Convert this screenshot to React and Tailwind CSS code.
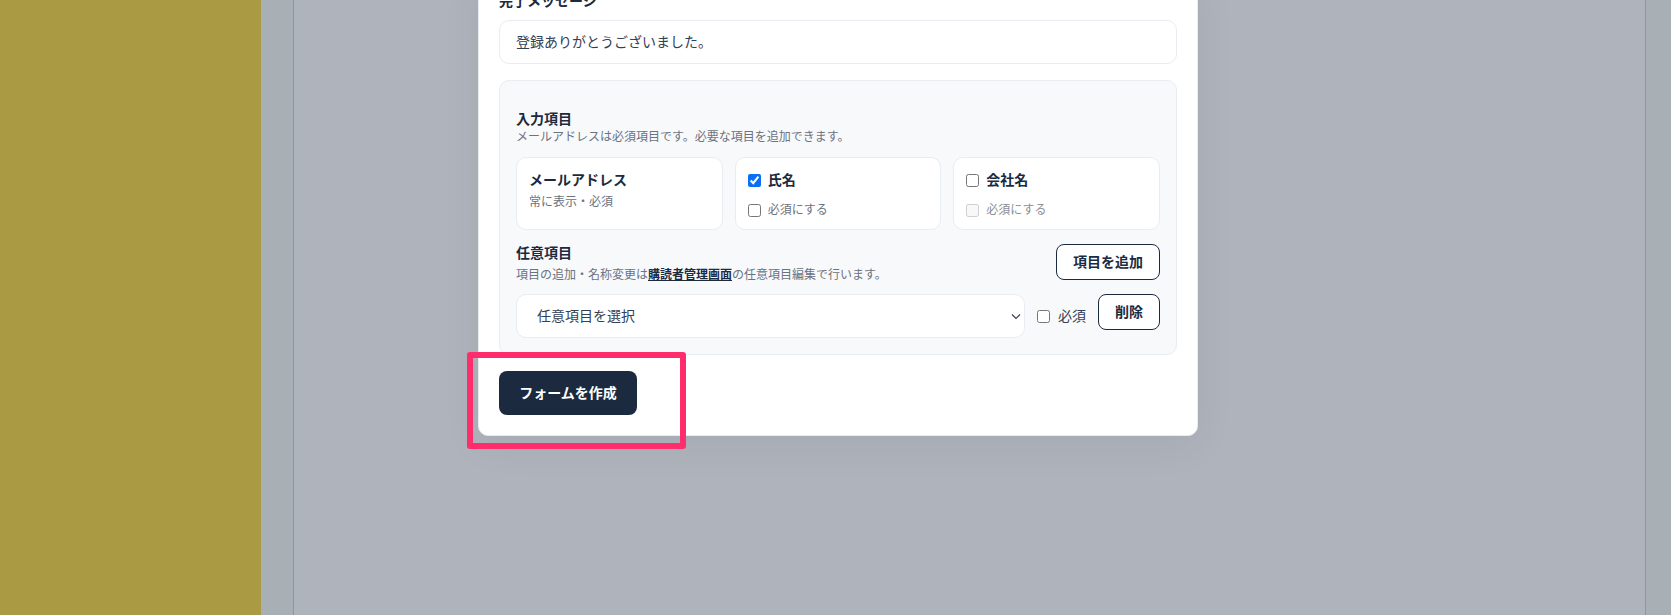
import React from "react";

function Check({ checked, disabled }) {
  return (
    <input
      type="checkbox"
      defaultChecked={checked}
      disabled={disabled}
      className="m-0 h-[13px] w-[13px] shrink-0 accent-[#0b6ff5]"
    />
  );
}

function FieldCard({ label, checked, disabled }) {
  return (
    <div className="flex h-[73px] flex-col rounded-[10px] border border-[#e9ecf1] bg-white px-3 pt-3">
      <label className="flex h-5 items-center gap-[7px] text-sm font-bold leading-5 text-[#1b2a3f]">
        <Check checked={checked} />
        {label}
      </label>
      <label className={`mt-[10px] flex h-5 items-center gap-[7px] text-xs leading-5 ${disabled ? "text-[#8a8f98]" : "text-[#6b7280]"}`}>
        <Check disabled={disabled} />
        必須にする
      </label>
    </div>
  );
}

export default function App() {
  return (
    <div className="relative flex h-[615px] w-[1671px] overflow-hidden bg-[#a9b0b5] font-['Inter','Noto_Sans_CJK_JP',sans-serif]">
      <aside className="w-[261px] shrink-0 bg-[#ab9a44]" />
      <main className="ml-8 mr-[25px] flex-1 border-x border-[#ab9a44] bg-[#afb3bb]" />

      <div className="absolute inset-0 flex items-end pb-[179px] pl-[478px]">
        <div className="w-[720px] rounded-[10px] border border-[#e8ebf0] bg-white p-5 shadow-[0_10px_40px_rgba(17,24,39,0.06)]">
          <label className="mb-[9px] block text-sm font-semibold leading-5 text-[#1b2a3f]">完了メッセージ</label>
          <input
            readOnly
            value="登録ありがとうございました。"
            className="block h-[44px] w-full rounded-[10px] border border-[#e9ecf1] bg-white px-4 pb-[2px] text-sm text-[#344054] outline-none"
          />

          <section className="mt-4 rounded-[10px] border border-[#e9ecf1] bg-[#f8f9fb] px-4 pb-4 pt-[28px]">
            <h3 className="text-sm font-bold leading-5 text-[#1b2a3f]">入力項目</h3>
            <p className="text-xs leading-4 text-[#6b7280]">メールアドレスは必須項目です。必要な項目を追加できます。</p>

            <div className="mt-3 grid grid-cols-3 gap-3">
              <div className="flex h-[73px] flex-col rounded-[10px] border border-[#e9ecf1] bg-white px-3 pt-3">
                <div className="text-sm font-bold leading-5 text-[#1b2a3f]">メールアドレス</div>
                <div className="mt-1 text-xs leading-4 text-[#6b7280]">常に表示・必須</div>
              </div>
              <FieldCard label="氏名" checked />
              <FieldCard label="会社名" disabled />
            </div>

            <div className="mt-[13px] flex items-start justify-between">
              <div>
                <h3 className="text-sm font-bold leading-5 text-[#1b2a3f]">任意項目</h3>
                <p className="mt-1 text-xs leading-4 text-[#6b7280]">
                  項目の追加・名称変更は
                  <a className="font-bold text-[#1b2a3f] underline">購読者管理画面</a>
                  の任意項目編集で行います。
                </p>
              </div>
              <button className="mt-px h-9 rounded-lg border border-[#1b2a3f] bg-white px-4 text-sm font-bold text-[#1b2a3f]">項目を追加</button>
            </div>

            <div className="mt-[11px] flex items-start gap-3">
              <div className="relative flex-1">
                <select className="block h-[44px] w-full appearance-none rounded-[10px] border border-[#e9ecf1] bg-white pl-5 text-sm text-[#344054] outline-none">
                  <option>任意項目を選択</option>
                </select>
                <svg className="absolute right-[4px] top-[19px] h-[7px] w-[10px] text-[#374151]" viewBox="0 0 10 7" fill="none" stroke="currentColor" strokeWidth="1.2">
                  <path d="M1 1.5 5 5.5 9 1.5" />
                </svg>
              </div>
              <label className="flex h-[44px] items-center gap-[8px] text-sm text-[#344054]">
                <Check />
                必須
              </label>
              <button className="h-9 rounded-lg border border-[#1b2a3f] bg-white px-4 text-sm font-bold text-[#1b2a3f]">削除</button>
            </div>
          </section>

          <button className="mt-4 block h-[44px] w-[138px] rounded-lg bg-[#1b2a3f] text-sm font-bold text-white">フォームを作成</button>
        </div>
      </div>

      {/* annotation highlight drawn over the screenshot */}
      <div className="absolute left-[467px] top-[352px] h-[97px] w-[219px] rounded-[3px] border-[6px] border-[#ff2d6b]" />
    </div>
  );
}
